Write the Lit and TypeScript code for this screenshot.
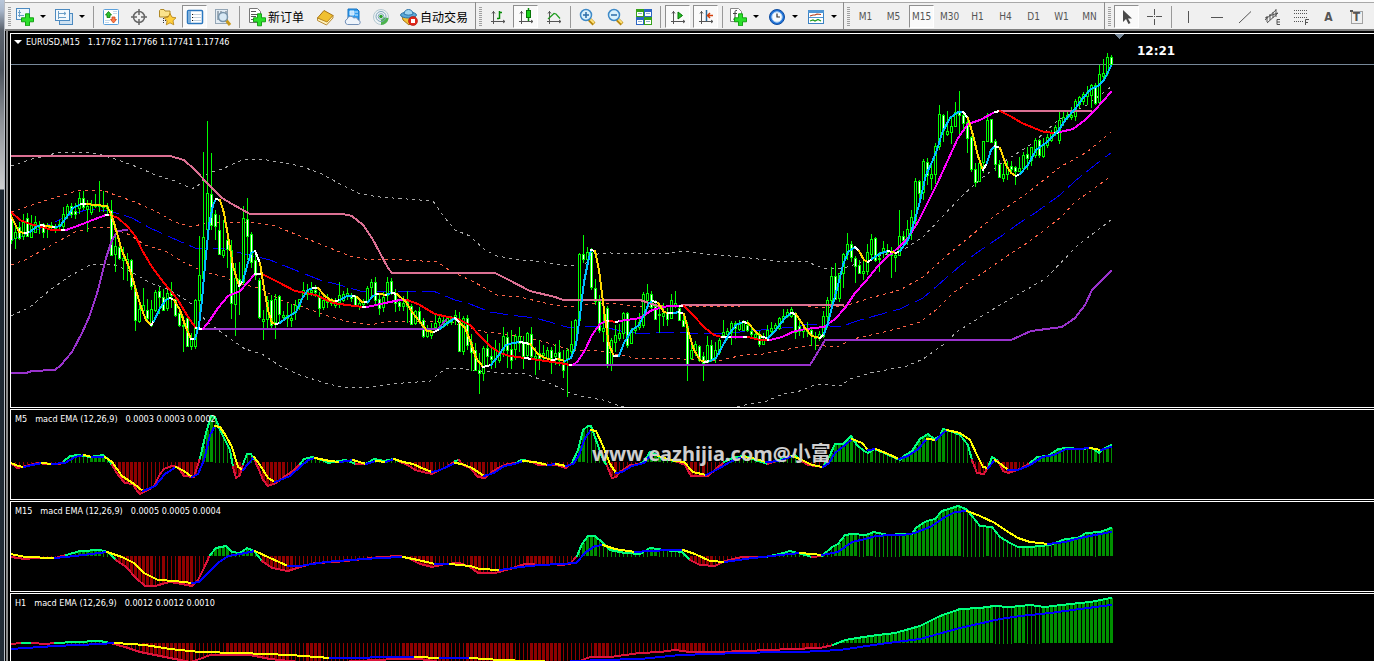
import { LitElement, html, svg, css } from "lit";
import { customElement, property, state } from "lit/decorators.js";
import { classMap } from "lit/directives/class-map.js";

type Point = [number, number];

const STEP = 4;
const FIRST_BAR = 11;

/* One candle per bar: high, body top, body bottom, low, and u(p) or d(own). */
const CANDLES = `
212 218 240 244 d|225 232 238 249 u|222 227 238 240 d|214 222 236 240 u|213 218 236 237 d|215 225 237 238 u
216 222 232 232 u|221 226 227 234 u|223 224 232 238 d|223 226 228 238 u|222 225 227 229 u|224 226 228 233 u
220 224 226 230 d|207 214 226 230 u|204 206 215 219 u|203 206 214 218 d|203 211 214 219 d|192 198 208 214 u
191 198 207 210 d|200 206 209 232 u|200 204 212 215 u|194 204 206 208 u|181 204 206 212 u|191 205 207 212 u
203 206 208 214 u|200 210 255 256 d|236 246 254 272 u|241 247 258 260 d|247 258 260 280 u|253 259 262 281 u
259 260 286 290 d|287 288 320 331 d|300 309 321 323 u|288 305 310 316 u|299 310 318 322 d|300 309 325 327 u
290 292 310 312 u|287 291 297 314 d|289 297 310 311 d|290 293 308 311 u|282 292 295 308 d|295 299 315 317 d
312 313 325 327 d|316 325 326 352 u|316 318 346 347 d|333 339 346 350 u|299 300 346 349 u|236 275 300 330 u
152 237 278 290 u|121 193 229 232 u|153 194 225 230 d|210 214 226 240 d|215 230 254 255 d|220 250 255 258 u
233 240 249 268 d|240 250 303 319 d|263 278 304 336 u|262 279 285 315 d|206 218 282 285 u|198 219 236 260 d
232 234 262 268 d|250 260 275 280 d|278 280 317 319 d|310 319 321 340 u|296 300 319 328 u|295 300 325 328 d
294 299 322 339 u|295 296 314 322 d|311 315 317 320 u|303 315 318 327 d|304 318 320 327 u|300 305 312 320 u
299 299 306 310 u|282 290 295 298 u|284 290 294 300 d|282 290 292 296 u|285 290 292 297 d|292 296 308 317 d
294 300 307 310 u|294 300 302 308 u|298 301 303 306 d|298 302 305 308 u|282 295 302 308 u|291 294 300 302 u
288 293 295 300 u|293 296 298 302 d|295 297 305 306 d|298 303 306 310 u|299 302 304 308 u|286 288 302 304 u
279 282 287 297 u|277 282 300 306 d|294 299 308 315 d|292 297 307 312 u|277 282 295 302 u|278 281 292 295 d
289 293 303 312 d|300 302 306 311 d|296 303 306 311 u|291 302 306 323 d|304 306 324 325 d|310 311 323 325 u
307 311 321 324 d|318 320 336 338 d|325 330 336 338 u|323 332 335 339 u|315 323 327 332 u|315 318 322 327 u
317 320 324 328 d|316 318 321 326 u|316 319 322 325 u|310 315 318 325 u|312 319 351 352 d|316 318 351 355 u
315 318 345 350 d|334 342 352 371 d|343 350 370 371 d|353 370 373 394 d|346 348 373 381 u|334 348 356 366 d
346 356 359 369 d|340 350 358 368 u|343 352 360 363 u|327 336 350 357 u|332 337 350 368 d|330 349 360 369 d
334 336 349 360 u|327 336 343 352 u|336 343 356 369 d|332 333 355 358 u|327 334 356 360 d|347 356 358 375 u
340 353 358 370 d|345 353 355 362 u|347 350 358 362 u|347 350 358 374 d|344 353 356 365 u|340 352 360 366 d
350 362 370 378 d|348 350 358 397 u|321 344 351 356 u|319 320 345 350 u|253 254 320 322 u|235 254 259 263 d
247 252 259 265 u|248 252 287 290 d|279 288 301 305 d|295 301 330 333 d|303 328 331 342 u|306 308 364 368 d
338 340 365 371 u|325 335 342 352 u|324 333 338 341 u|312 313 333 339 u|312 313 345 348 d|328 330 343 344 u
320 327 330 334 u|313 322 327 330 u|292 294 325 328 u|284 293 300 308 u|291 294 307 310 d|300 306 319 320 d
308 314 315 333 u|303 313 316 326 u|308 312 319 326 d|294 300 318 319 u|291 303 306 308 u|305 308 320 321 d
315 320 326 326 d|322 326 365 381 d|339 350 358 360 u|341 344 350 356 u|345 346 360 362 d|352 356 363 381 d
336 345 362 363 u|340 345 360 362 d|342 350 358 363 u|338 340 352 355 u|320 332 335 338 u|328 331 334 340 u
321 323 332 345 u|321 323 328 339 d|320 323 329 331 u|320 322 330 331 u|320 325 330 332 d
328 331 334 338 d|331 334 337 339 u|331 335 344 347 d|333 339 344 344 u|325 330 338 340 u|322 328 331 334 u
323 325 328 331 u|317 318 328 330 u|309 316 319 323 u|309 312 316 318 u|307 309 316 318 u|312 314 332 339 d
318 326 331 336 d|326 329 331 338 u|322 329 331 337 u|328 330 335 346 d|332 336 338 350 d|331 334 338 341 u
311 316 336 338 u|297 300 316 328 u|267 276 300 305 u|263 276 299 300 d|273 273 298 302 u|253 254 273 288 u
233 244 254 260 u|241 244 257 262 d|256 258 266 283 d|260 265 273 274 d|259 271 273 280 u|244 252 271 275 u
234 239 254 258 u|237 238 260 262 d|252 258 259 272 u|241 248 252 258 u|244 250 252 258 u|247 252 255 278 d
252 255 257 272 u|210 236 255 256 u|231 236 240 248 d|220 229 240 245 u|210 217 230 240 u|178 181 220 224 u
180 181 193 200 d|159 161 192 200 u|158 162 175 185 d|165 174 178 190 u|143 146 174 184 u|105 114 146 150 u
114 115 130 142 d|111 131 134 136 u|117 126 132 144 u|102 112 126 127 u|91 111 115 134 d|112 115 123 130 d
117 122 138 153 d|136 137 169 172 d|163 169 182 187 d|158 163 181 182 u|141 141 162 173 u|113 120 141 142 u
119 119 142 143 d|139 141 164 171 d|160 164 177 178 d|163 174 178 182 u|161 168 174 180 u|161 166 169 174 d
166 167 171 185 d|157 168 171 172 u|152 155 168 172 u|147 154 158 170 d|147 147 160 166 u|138 140 155 158 u
139 140 155 158 d|138 145 156 158 u|134 137 145 148 u|130 133 140 142 u|125 127 131 136 u|112 120 140 144 u
110 117 121 126 u|112 115 117 120 u|107 115 117 120 u|99 101 116 121 u|96 97 104 108 u|92 94 101 105 u
86 92 96 105 u|84 85 95 108 u|83 85 103 105 d|65 74 102 105 u|59 73 76 80 u|53 57 73 76 u
55 57 64 66 d`;

const COLORS: Record<string, string> = {
  g: "#ffd700", w: "#ffffff", c: "#00bfff", r: "#ff0000", m: "#ff00ff",
};

/* Moving averages: a colour letter starts each run, the runs join up. */
const FAST_MA = `g 11,216 15,224 19,232 25,233 w 30,232 c 36,227 41,225 w 46,226 g 53,227 w 56,227 c 60,226 66,218 73,208 81,204
w 87,204 g 95,205 107,206 111,214 115,226 122,251 127,262 132,276 137,294 142,310 146,320 151,325 w 154,321 c 160,308 166,300 170,298
w 174,300 g 180,310 185,325 191,339 w 195,339 c 199,325 202,300 205,265 209,225 213,205 216,199 w 220,200 g 224,213 228,236 233,266 239,286
w 243,281 c 247,266 251,253 255,251 w 260,263 g 264,288 268,310 272,323 276,324 w 280,323 c 286,318 296,312 303,297 308,290 313,288
w 318,288 g 324,295 330,300 336,301 w 340,300 c 347,296 353,296 w 357,297 g 362,302 365,302 w 368,302 c 372,297 376,294 w 380,294
g 386,295 w 388,294 c 392,293 w 397,294 g 406,302 412,312 420,322 427,331 434,332 w 440,329 c 446,324 455,318 w 460,323
g 465,328 470,340 476,358 483,367 w 491,365 c 498,356 506,345 513,343 520,342 w 530,344 g 538,354 545,358 552,360 w 558,359 g 565,361
c 571,358 576,345 580,315 584,282 588,262 591,250 w 595,251 g 599,270 604,310 609,345 614,356 w 619,356 c 624,343 632,330 639,325 644,315 649,303 653,301
w 658,303 g 664,312 668,313 w 674,313 c 679,312 w 684,314 g 688,330 694,350 700,360 705,362 w 710,361 c 716,358 722,347 729,334 736,325 743,322
w 748,323 g 756,332 762,337 w 768,338 c 775,331 785,318 791,313 w 796,314 g 805,328 812,336 820,338 w 824,334
c 828,323 832,307 838,285 843,265 848,252 855,247 w 859,251 g 864,260 868,262 w 872,259 c 879,254 888,251 w 892,252 g 896,253 w 900,251
c 908,240 913,226 919,205 926,175 932,162 937,150 942,133 950,118 958,112 963,112 w 968,118 g 973,135 978,156 983,170 w 987,163
c 991,150 995,146 w 1000,148 g 1006,165 1011,173 1016,176 w 1020,174 c 1028,165 1036,150 1047,142 1058,131 1066,119 1075,109 1083,98 1091,89 1098,86 1104,80 1111,66`;

const SLOW_MA = `r 11,212 20,220 30,224 42,227 52,230 62,230 w 66,230 m 80,225 95,219 106,215 w 110,215
r 118,218 128,227 136,237 142,250 152,267 164,283 178,300 188,317 196,328 w 203,329 m 210,320 218,308 228,296 240,291 248,282 255,274
w 262,274 r 278,282 295,291 316,295 333,303 347,305 363,307 w 367,307 m 385,303 400,300 407,300 r 418,304 435,314 448,317 458,319 470,325 480,336 490,346 500,353 510,356 525,358
w 532,359 r 545,361 560,363 570,365 w 573,365 m 578,361 585,350 592,335 600,324 606,321 w 610,321 r 616,322 w 620,321
m 640,318 652,310 668,306 680,306 w 684,306 r 692,314 705,328 714,335 722,337 w 732,337 m 744,337 w 748,337 r 760,340 768,340 w 770,340
m 782,337 795,331 806,329 824,327 835,319 845,308 855,293 866,281 877,267 887,257 898,248 908,238 918,222 928,202 938,182 948,160 958,138 968,124 980,120 995,112
w 1000,111 r 1010,116 1022,123 1034,128 1044,132 1055,133 w 1060,132 m 1073,129 1085,120 1095,110 1103,101 1111,92`;

const CHANNELS: [string, string][] = [
  ["upper", "11,156 170,156 184,160 195,170 208,184 222,198 232,204 250,214 343,214 352,216 363,225 372,238 380,253 388,268 392,273 495,273 505,278 530,291 555,297 563,300 640,300 658,306"],
  ["upper", "682,305 843,305"],
  ["upper", "998,111 1091,111"],
  ["lower", "11,373 26,373 32,371 55,370 61,365 72,352 82,333 90,315 98,290 106,258 112,240 118,231 127,230"],
  ["lower", "201,329 438,329 446,320"],
  ["lower", "572,365 810,365 818,352 825,340 1011,340 1031,331 1062,327 1075,318 1085,305 1092,290 1102,280 1111,271"],
];

const BANDS: [string, string][] = [
  ["outer", "11,166 32,159 45,156 60,152 85,152 102,155 118,160 140,168 155,175 175,181 192,189 200,184 208,173 222,169 242,160 260,159 280,162 300,166 320,173 340,184 360,194 380,197 433,201 445,218 455,230 470,236 485,250 497,256 520,260 545,262 565,266 585,264 598,254 610,253 660,254 687,251 705,254 730,256 750,258 775,261 805,261 815,265 822,268 840,269 860,263 880,256 906,248 923,237 940,219 963,195 982,178 1002,163 1033,143 1058,120 1087,105 1111,87"],
  ["inner", "11,212 35,204 60,196 80,190 105,191 115,195 135,202 155,211 175,222 192,227 205,223 222,222 255,223 275,226 300,236 330,248 350,256 370,260 390,259 438,262 450,271 470,280 485,288 497,295 520,297 545,303 565,307 585,305 600,303 620,304 640,307 660,305 680,306 710,307 740,306 800,304 815,308 845,306 870,298 900,290 923,277 945,257 967,239 997,214 1030,191 1060,167 1087,152 1111,132"],
  ["mid", "11,240 30,233 50,224 75,213 90,209 110,211 132,218 150,228 170,237 195,248 225,249 245,254 270,260 295,270 320,280 340,285 360,291 433,291 455,300 470,304 490,312 510,315 535,318 550,322 570,328 600,326 625,332 645,334 665,332 690,333 722,334 740,332 793,327 810,324 840,327 860,320 900,309 923,298 945,279 960,266 975,254 1000,237 1018,224 1035,213 1060,195 1075,181 1095,165 1111,153"],
  ["inner", "11,265 25,260 50,246 75,232 95,227 112,228 130,235 145,245 165,251 185,263 205,272 225,277 240,284 260,288 280,300 300,306 325,315 345,321 370,325 390,321 430,321 450,322 485,332 520,336 545,342 570,350 600,351 620,355 640,359 665,358 695,360 722,360 743,355 763,354 800,347 813,345 837,347 853,339 880,333 900,328 920,322 937,309 953,293 987,270 1010,254 1030,241 1060,218 1075,202 1095,188 1111,176"],
  ["outer", "11,316 30,307 50,290 70,276 90,265 112,264 130,271 150,283 170,290 195,306 205,320 225,335 245,349 262,354 280,366 300,375 325,383 345,388 370,387 390,384 430,381 445,369 455,368 480,371 500,373 525,374 545,381 570,393 585,397 603,400 620,406 680,420 740,406 767,401 783,394 797,392 817,384 840,386 850,379 870,373 907,366 923,359 943,345 958,331 1000,305 1045,279 1078,245 1111,220"],
];

interface Macd {
  name: string; values: string; top: number; zero: number;
  fast: string; signal: string; thick: Point[];
}

const MACD: Macd[] = [
  {
    name: "M5", values: "0.0003 0.0003 0.0002", top: 410, zero: 462,
    fast: "11,463 17,468 22,467 38,463 46,464 60,464 64,461 70,456 78,455 90,457 103,455 108,459 112,465 118,475 125,483 133,484 137,491 140,494 148,490 154,486 160,474 164,469 172,466 178,467 184,476 194,477 200,458 206,433 211,416 215,417 220,430 230,450 233,467 236,478 240,475 243,464 247,454 251,454 255,461 259,470 263,480 268,486 276,483 284,477 293,471 300,464 304,459 312,457 322,460 328,463 345,460 356,464 366,464 374,459 384,461 394,459 400,462 408,465 415,470 423,472 432,474 440,470 448,466 455,461 459,460 463,465 470,468 478,477 485,478 492,472 500,467 508,464 516,463 521,460 530,461 538,465 556,465 566,468 572,463 578,450 583,430 588,426 591,426 596,440 602,457 607,466 612,478 616,477 620,472 630,465 640,464 645,460 650,452 655,454 662,459 675,461 685,465 691,476 708,476 716,469 724,462 735,457 745,456 755,460 768,464 776,461 785,458 795,455 800,460 808,465 823,467 830,455 835,444 843,444 851,436 857,445 864,451 868,453 874,449 884,453 893,457 900,460 904,456 912,451 920,439 928,434 934,439 940,436 943,429 950,431 960,435 968,445 972,460 977,473 984,474 989,465 992,457 998,461 1003,471 1008,473 1020,469 1030,463 1037,457 1048,456 1058,449 1067,448 1080,449 1092,448 1099,453 1103,449 1111,445",
    signal: "11,463 18,466 24,467 32,465 42,463 52,464 65,463 75,457 84,455 92,457 105,457 112,462 122,476 134,484 143,491 155,486 165,474 176,467 184,471 192,477 198,474 204,460 210,435 215,426 220,427 226,436 232,447 238,467 243,470 248,464 254,457 260,465 268,478 275,482 290,476 300,467 308,460 315,458 330,461 340,462 353,460 366,464 376,461 386,462 394,459 403,462 413,464 424,469 432,472 440,470 455,463 462,464 472,468 484,476 494,473 504,466 515,464 523,461 535,462 548,465 556,464 566,466 573,464 579,455 585,438 591,430 596,431 603,446 610,464 616,473 622,472 632,466 644,463 650,456 656,455 670,460 684,462 693,472 706,475 718,469 730,462 742,457 752,458 766,462 780,461 792,456 800,459 812,465 823,467 829,463 835,453 845,445 852,439 862,443 868,450 876,449 888,454 899,459 908,456 918,449 927,439 936,440 942,434 947,430 960,433 970,440 977,455 983,467 988,468 995,460 1002,465 1008,470 1018,470 1030,465 1042,457 1054,455 1066,449 1078,449 1090,448 1101,450 1111,447",
    thick: [[88, 104], [119, 141], [176, 196], [203, 212], [235, 240], [263, 284], [413, 433], [470, 484], [488, 497], [579, 584], [611, 616], [646, 660], [690, 697], [702, 705], [830, 852], [868, 873], [903, 929], [939, 945], [978, 981], [1002, 1017], [1035, 1061], [1094, 1097], [1106, 1108]],
  },
  {
    name: "M15", values: "0.0005 0.0005 0.0004", top: 502, zero: 556,
    fast: "11,557 25,559 35,558 55,558 66,555 80,551 100,550 108,552 116,560 126,567 136,578 145,586 155,586 170,582 182,584 192,586 198,580 204,568 210,555 216,548 226,546 232,552 240,553 247,548 254,551 262,561 272,568 288,571 300,567 315,563 335,562 355,560 380,557 400,556 408,558 420,564 432,567 445,564 460,563 470,567 478,573 495,573 510,569 525,564 545,565 555,564 560,565 570,564 577,556 582,544 588,536 595,536 603,543 610,550 625,553 640,554 650,548 665,550 682,552 690,560 700,565 715,566 725,561 742,557 765,557 780,554 790,551 798,553 812,557 822,556 832,547 838,544 845,535 852,534 866,535 874,532 888,535 903,534 912,534 916,528 923,523 927,521 935,519 942,511 952,508 958,506 966,509 972,516 980,526 992,527 1000,537 1010,543 1018,547 1030,547 1050,545 1065,539 1078,538 1086,533 1100,532 1111,528",
    signal: "11,554 25,557 55,558 75,556 107,552 122,557 134,563 144,573 158,580 175,581 192,583 199,582 208,573 218,563 228,556 240,554 255,551 270,558 288,566 300,566 325,562 350,560 380,558 403,557 418,560 435,564 450,564 470,566 480,569 500,570 520,567 540,565 560,564 576,563 586,552 595,546 603,545 615,549 635,552 650,551 670,550 683,550 695,554 710,561 725,562 745,559 780,555 800,553 822,555 838,552 852,542 865,539 876,536 890,535 903,535 915,533 932,526 945,517 955,512 967,511 980,516 995,523 1005,530 1018,538 1030,542 1048,544 1065,542 1080,538 1100,534 1111,532",
    thick: [[79, 100], [119, 153], [160, 164], [176, 192], [210, 228], [243, 254], [260, 291], [411, 433], [470, 480], [524, 554], [580, 595], [648, 656], [690, 712], [832, 857], [866, 873], [903, 960], [987, 989], [1022, 1048], [1054, 1092], [1098, 1111]],
  },
  {
    name: "H1", values: "0.0012 0.0012 0.0010", top: 594, zero: 643,
    fast: "11,644 22,643 32,643 45,644 55,643 75,642 100,641 110,643 125,647 140,652 155,655 170,658 190,662 200,659 210,655 230,655 250,655 270,659 300,662 340,662 395,659 420,659 440,662 500,665 570,663 580,661 590,657 610,657 640,653 660,652 675,650 690,652 720,652 745,651 770,650 790,649 820,648 833,645 845,640 870,636 895,633 920,626 940,616 960,609 980,608 994,606 1010,607 1030,605 1045,607 1070,604 1090,602 1111,598",
    signal: "11,649 55,646 100,644 115,643 145,645 170,649 200,652 240,653 290,655 330,658 350,658 390,657 415,657 440,658 470,658 500,660 560,662 600,660 640,659 660,657 680,655 740,653 780,652 800,652 840,650 880,644 920,639 960,628 1000,619 1020,616 1050,613 1080,609 1111,605",
    thick: [[143, 192], [226, 290], [306, 320], [402, 448], [466, 512], [530, 560], [594, 608], [674, 704], [802, 816], [838, 992], [1014, 1024], [1042, 1111]],
  },
];

const toPoints = (list: string): Point[] =>
  list.trim().split(/\s+/).map((pair) => pair.split(",").map(Number) as Point);

const valueAt = (points: Point[], x: number): number => {
  const i = Math.max(1, points.findIndex((p) => p[0] >= x));
  const [x0, y0] = points[i - 1];
  const [x1, y1] = points[i];
  return Math.round(y0 + ((y1 - y0) * (x - x0)) / (x1 - x0));
};

const coloredRuns = (source: string) => {
  const runs: { color: string; points: string[] }[] = [];
  let last = "";
  for (const token of source.trim().split(/\s+/)) {
    if (COLORS[token]) {
      runs.push({ color: COLORS[token], points: last ? [last] : [] });
    } else {
      runs[runs.length - 1].points.push(token);
      last = token;
    }
  }
  return runs.map((r) => svg`<polyline class="curve" stroke=${r.color} points=${r.points.join(" ")} />`);
};

const pairRuns = (points: Point[], pick: (a: Point, b: Point) => string) =>
  points.slice(1).map((b, i) => svg`<polyline class="curve" stroke=${pick(points[i], b)}
    points=${`${points[i].join(",")} ${b.join(",")}`} />`);

const plotStyles = css`
  :host { display: block; min-width: 0; min-height: 0; position: relative; overflow: hidden;
    background: #000; border: 1px solid #fff; border-right: 0; box-sizing: border-box; }
  svg { display: block; width: 100%; height: 100%; position: absolute; inset: 0; shape-rendering: crispEdges; }
  .curve { fill: none; stroke-width: 2; stroke-linejoin: round; stroke-linecap: square; }
  .caption { display: flex; align-items: center; gap: 8px; position: relative; margin: 0; white-space: pre; color: #fff;
    font: 400 9px/14px "DejaVu Sans Condensed", "DejaVu Sans", sans-serif; }
`;

@customElement("price-chart")
class PriceChart extends LitElement {
  static styles = [plotStyles, css`
    .caption { padding: 1px 3px; }
    .symbol { display: flex; align-items: center; gap: 4px; }
    .caret { border: 4px solid transparent; border-top-color: #fff; border-bottom: 0; }
    .clock { position: absolute; left: 1126px; top: 8px; color: #fff;
      font: 700 12px/18px "DejaVu Sans", sans-serif; }
    .outer, .inner, .mid { fill: none; stroke-width: 1; }
    .outer { stroke: #a9a9a9; stroke-dasharray: 3 4; }
    .inner { stroke: #ff6347; stroke-dasharray: 3 4; }
    .mid { stroke: #0000ff; stroke-dasharray: 18 6; }
    .upper { stroke: #db7093; }
    .lower { stroke: #9932cc; }
    .wick, .up, .down { stroke: #00ff00; stroke-width: 1; }
    .up { fill: #000; }
    .down { fill: #fff; }
    .price { stroke: #778899; }
    .shift { fill: #778899; }
  `];

  render() {
    const candles = CANDLES.trim().split(/[|\n]/).map((row, i) => {
      const [high, top, bottom, low, kind] = row.trim().split(" ");
      const x = FIRST_BAR + i * STEP + 0.5;
      return svg`<line class="wick" x1=${x} x2=${x} y1=${high} y2=${low} />
        <rect class=${kind === "u" ? "up" : "down"} x=${x - 1} y=${+top + 0.5} width="2" height=${Math.max(1, +bottom - +top)} />`;
    });
    return html`
      <svg role="img" aria-label="EURUSD M15"><g transform="translate(-11 -34)">
        <line class="price" x1="11" x2="6000" y1="64.5" y2="64.5" />
        <path class="shift" d="M1114 34h10l-5 5z" />
        ${BANDS.map(([kind, pts]) => svg`<polyline class=${kind} points=${pts} />`)}
        ${candles}
        ${CHANNELS.map(([kind, pts]) => svg`<polyline class="curve ${kind}" points=${pts} />`)}
        ${coloredRuns(SLOW_MA)}
        ${coloredRuns(FAST_MA)}
      </g></svg>
      <p class="caption"><span class="symbol"><span class="caret"></span>EURUSD,M15</span><span>1.17762 1.17766 1.17741 1.17746</span></p>
      <span class="clock">12:21</span>`;
  }
}

@customElement("macd-chart")
class MacdChart extends LitElement {
  @property({ attribute: false }) data!: Macd;
  static styles = [plotStyles, css`
    .caption { padding: 2px 4px; }
    .rise { fill: #009000; }
    .fall { fill: #900000; }
  `];

  render() {
    const { name, values, top, zero, thick } = this.data;
    const fast = toPoints(this.data.fast);
    const signal = toPoints(this.data.signal);
    const bars = [];
    for (let x = FIRST_BAR; x <= 1111; x += STEP) {
      const y = valueAt(fast, x);
      if (y === zero) continue;
      const wide = thick.some(([a, b]) => x >= a && x <= b);
      bars.push(svg`<rect class=${y < zero ? "rise" : "fall"} x=${wide ? x - 1 : x} width=${wide ? 3 : 1}
        y=${Math.min(y, zero)} height=${Math.abs(y - zero) + (y < zero && !wide ? 1 : 0)} />`);
    }
    return html`
      <svg role="img" aria-label="${name} MACD"><g transform="translate(-11 ${-top})">
        ${bars}
        ${pairRuns(fast, (a, b) => ((a[1] + b[1]) / 2 <= zero ? "#00ff7f" : "#dc143c"))}
        ${pairRuns(signal, (a, b) => (b[1] > a[1] ? "#ffff00" : "#0000ff"))}
      </g></svg>
      <p class="caption"><span>${name}</span><span>macd EMA (12,26,9)</span><span>${values}</span></p>`;
  }
}

const axes = svg`<path d="M4.5 3v13M2 13.5h14M3 5.5l1.5-2 1.5 2M14 12l2 1.5-2 1.5" class="ink" />`;
const plus = svg`<path d="M10 6.500h4v4h4v4h-4v4h-4v-4H6v-4h4z" transform="translate(-.5 -.7)" fill="#2be02b" stroke="#0a9a0a" stroke-width=".9" />`;
const lens = (sign: unknown) => svg`<path d="M10 11l5 5" stroke="#b8860b" stroke-width="4" /><path d="M11 11l4 4" stroke="#ffe27a" stroke-width="2" />
  <circle cx="7" cy="7" r="5.5" fill="#d9f1fc" stroke="#3e8ac8" stroke-width="1.5" />${sign}`;

const ICONS: Record<string, unknown> = {
  newChart: svg`<rect x=".5" y=".5" width="13" height="11" fill="#eef6fc" stroke="#4c8ac0" /><path d="M3.500 2v7M2 7.500h6M2 4.500h3" stroke="#6b9fc8" fill="none" />${plus}`,
  profiles: svg`<rect x="4.500" y="5.500" width="13" height="11" fill="#cfe2f2" stroke="#4c8ac0" /><rect x=".5" y="1.500" width="14" height="11" fill="#f4f9fd" stroke="#4c8ac0" /><path d="M3 5.500h8M9 4l2 1.500L9 7M3 9.500h8M3.500 3v8" stroke="#6b9fc8" fill="none" />`,
  market: svg`<rect x="1.500" y="1.500" width="15" height="15" rx="1" fill="#fff" stroke="#5aa0dc" /><path d="M3 12.500h5M3 14.500h4M11 3.500h4M11 5.500h4" stroke="#c4d8e8" /><path d="M6.500 3.500L9.500 7H8v2.500H5V7H3.500z" fill="#2fc22f" stroke="#0a7a0a" stroke-width=".8" /><path d="M11.500 15L8.500 11.500H10V9h3v2.500h1.500z" fill="#ff7a48" stroke="#c8481c" stroke-width=".8" />`,
  target: svg`<circle cx="9" cy="9" r="5.500" fill="none" stroke="#666" stroke-width="1.500" /><path d="M9 1v6M9 11v6M1 9h6M11 9h6" stroke="#666" stroke-width="1.500" />`,
  folder: svg`<path d="M1.500 9V2.500l1-1H6l1 1.500h5V8L7 9z" fill="#fbe38c" stroke="#b08a28" /><path d="M5.500 10v6M5 12.500h3" stroke="#333" stroke-dasharray="1 1" /><path d="M12 5.500l2 3.700 4 .6-3 2.900.8 4.100-3.800-2-3.700 2 .8-4.100-3-2.900 4-.6z" fill="#ffcf3d" stroke="#b27d0c" stroke-width=".8" />`,
  navigator: svg`<rect x="1.500" y="2.500" width="15" height="13" rx="1" fill="#fff" stroke="#2b78c0" stroke-width="1.500" /><path d="M2 3h3v12H2z" fill="#7eb0dc" /><path d="M7 6.500h8M7 9.500h8M7 12.500h8" stroke="#c4d2de" /><path d="M6 6h1v1H6zM6 9h1v1H6zM6 12h1v1H6z" fill="#111" />`,
  tester: svg`<rect x="1.500" y="1.500" width="12" height="14" fill="#e4edf4" stroke="#94a6b6" /><path d="M4 3v9M7 3v3M12 3v3" stroke="#5a6b7a" /><path d="M12 12l4 5" stroke="#c9991b" stroke-width="3" /><circle cx="9" cy="9" r="4.500" fill="#d6e8f4" fill-opacity=".85" stroke="#7a96ac" stroke-width="1.500" />`,
  order: svg`<path d="M1.500.5h8l3 3v11h-11z" fill="#fff" stroke="#777" /><path d="M3 3.500h5M3 6.500h8M3 8.500h5M3 11.500h4" stroke="#555" />${plus}`,
  book: svg`<path d="M1.500 10L8 2.500l9 5-6 8z" fill="#f0c030" stroke="#a87413" /><path d="M1.500 10l9.500 4 6-6.500v2.500L10.500 17 1.500 12.500z" fill="#fff0b8" stroke="#a87413" stroke-width=".8" />`,
  cloud: svg`<path d="M4 1h9l2 2v9H4z" fill="#2f9cf0" stroke="#1673c0" /><path d="M6 3h4v4H6zM11 4h3M11 7h3" fill="#bfe2ff" stroke="#d8efff" /><path d="M3.500 16.500a2.800 2.800 0 01-.3-5.400 3.500 3.500 0 016.500-1 3 3 0 014.500 1.900A2.300 2.300 0 0114.500 16.500z" fill="#eef4fb" stroke="#7290b8" />`,
  signal: svg`<circle cx="9" cy="9" r="7.500" fill="#eef3f4" stroke="#b4c8d0" /><path d="M9 17V9l7.500 1A7.500 7.500 0 019 17z" fill="#4cb44c" /><circle cx="9" cy="8.500" r="5" fill="none" stroke="#7ea4bc" /><circle cx="9" cy="8.500" r="2.800" fill="#fff" stroke="#7ea4bc" /><circle cx="9" cy="8.500" r="1.800" fill="#2ba12b" />`,
  expert: svg`<path d="M2 8h13v3l-6 6-6-5z" fill="#f2c336" stroke="#a87413" /><ellipse cx="8.500" cy="7" rx="8" ry="3" fill="#5aa8d8" stroke="#2d74a8" /><path d="M4 6c0-6 9-6 9 0-2 1.500-7 1.500-9 0z" fill="#9fd4f0" stroke="#2d74a8" /><circle cx="13" cy="13" r="4.500" fill="#e0261b" stroke="#a81108" stroke-width=".6" /><rect x="11" y="11" width="4" height="4" fill="#fff" />`,
  bars: svg`${axes}<path d="M10.500 3v8M8 10.500h2M11 4.500h2" stroke="#078a07" stroke-width="1.500" />`,
  candles: svg`${axes}<path d="M11.500 0v13" stroke="#078a07" stroke-width="1.500" /><rect x="9.500" y="2.500" width="4" height="7" fill="#19d019" stroke="#067506" />`,
  line: svg`${axes}<path d="M3 11L9 5.500l2 .5 4 4.500" fill="none" stroke="#1d9b1d" stroke-width="1.200" />`,
  zoomIn: lens(svg`<path d="M4 7h6M7 4v6" stroke="#2b6ca8" stroke-width="1.500" />`),
  zoomOut: lens(svg`<path d="M4 7h6" stroke="#2b6ca8" stroke-width="1.500" />`),
  tile: svg`<path d="M1 1h8v8H1z" fill="#35a31b" /><path d="M9 1h8v8H9zM1 9h8v8H1z" fill="#2c66c4" /><path d="M9 9h8v8H9z" fill="#35a31b" /><path d="M2 4h6v4H2zM10 4h6v4h-6zM2 12h6v4H2zM10 12h6v4h-6z" fill="#fff" /><path d="M3 5.500h4M11 5.500h4M3 13.500h4M11 13.500h4" stroke="#8fb0cc" />`,
  scroll: svg`${axes}<path d="M9 4l4.500 3.500L9 11z" fill="#25bf25" stroke="#067506" />`,
  shift: svg`${axes}<path d="M9.500 2v11" stroke="#286a9c" stroke-width="1.500" /><path d="M16 7.500h-5M13 5l-2.500 2.500L13 10" fill="none" stroke="#d2400c" stroke-width="1.500" />`,
  indicator: svg`<path d="M1.500.5h8l3 3v10h-11z" fill="#fff" stroke="#888" /><path d="M8 2.500C6 2 6 3 6 5v5.500c0 1-1 1-2 .5M4 5.500h4" fill="none" stroke="#444" />${plus}`,
  clock: svg`<circle cx="9" cy="9" r="7.500" fill="#1f72d8" stroke="#0f4da0" /><circle cx="9" cy="9" r="5.200" fill="#f6fbff" stroke="#a6cdf2" /><path d="M9 5.500V9h3" fill="none" stroke="#333" stroke-width="1.200" />`,
  template: svg`<rect x="1.500" y="2.500" width="15" height="13" fill="#fff" stroke="#3b82c4" /><path d="M1 2h16v3H1zM2 9h14v1H2z" fill="#4f95d4" /><path d="M3 8l3-1h2l2-1 4 .5" fill="none" stroke="#b23a1c" stroke-width="1.200" /><path d="M3 13l3-1 2 1 3-1.500 3 1.500" fill="none" stroke="#1d9b1d" stroke-width="1.200" />`,
  cursor: svg`<path d="M5 2v12l3-3 2.500 5 2-1-2.500-4.500h4z" fill="#4a4a4a" />`,
  cross: svg`<path d="M8.500 1v6M8.500 11v6M1 8.500h6M10 8.500h6" class="ink" /><path d="M8 8h1v1H8z" fill="#555" />`,
  vline: svg`<path d="M8.500 3v12" class="ink" />`,
  hline: svg`<path d="M3 9.500h12" class="ink" />`,
  trend: svg`<path d="M3 15L15 3.500" class="ink" />`,
  channel: svg`<path d="M1 12L12 2M3 15L14 5M3 8v6M6 6v6M9 4v6M12 1v8M1 10l3-1M5 8l9-3" class="ink" /><path d="M16 11.500h-3v5h3M13 14h3" class="ink" />`,
  fibo: svg`<path d="M2 2.500h14M2 5.500h14M2 9.500h14M2 13.500h9" class="ink" stroke-dasharray="1 1" /><path d="M13.500 17v-5.500H17M14 14.500h2" class="ink" />`,
  label: svg`<rect x="3.500" y="3.500" width="11" height="12" class="ink" stroke-dasharray="1 1" /><path d="M2 2h3v2H2z" fill="#555" />`,
};

interface Tool { id: string; title: string; text?: string; menu?: boolean; glyph?: string }
const tool = (id: string, title: string, extra: Partial<Tool> = {}): Tool => ({ id, title, ...extra });
const SEP = null;

const GROUPS: (Tool | null)[][] = [
  [
    tool("newChart", "新图表", { menu: true }), tool("profiles", "配置文件", { menu: true }), SEP,
    tool("market", "市场报价"), tool("target", "数据窗口"), tool("folder", "导航"), tool("navigator", "终端"), tool("tester", "策略测试"), SEP,
    tool("order", "新订单", { text: "新订单" }), tool("book", "编辑器"), tool("cloud", "云服务"), tool("signal", "信号"),
    tool("expert", "自动交易", { text: "自动交易" }),
  ],
  [
    tool("bars", "柱状图"), tool("candles", "阴阳烛"), tool("line", "折线图"), SEP,
    tool("zoomIn", "放大"), tool("zoomOut", "缩小"), tool("tile", "平铺窗口"), SEP,
    tool("scroll", "自动滚动"), tool("shift", "图表平移"), SEP,
    tool("indicator", "指标", { menu: true }), tool("clock", "周期", { menu: true }), tool("template", "模板", { menu: true }),
  ],
  ["M1", "M5", "M15", "M30", "H1", "H4", "D1", "W1", "MN"].map((p) => tool(p, p, { glyph: p })),
  [
    tool("cursor", "光标"), tool("cross", "十字准线"), SEP, tool("vline", "垂直线"), tool("hline", "水平线"), tool("trend", "趋势线"),
    tool("channel", "通道"), tool("fibo", "斐波那契"), tool("text", "文字", { glyph: "A" }), tool("label", "文字标签", { glyph: "T" }),
  ],
];

@customElement("tool-bar")
class ToolBar extends LitElement {
  @state() private pressed = new Set(["navigator", "candles", "scroll", "shift", "M15", "cursor"]);

  static styles = css`
    :host { display: flex; height: 31px; box-sizing: border-box; overflow: hidden; background: #f0f0f0;
      border-top: 2px solid #fbfbfb; border-bottom: 2px solid #808080; box-shadow: inset 0 1px #a8a8a8; }
    .group { display: flex; align-items: center; gap: 3px; padding: 2px 2px 0 3px; flex: none; border-right: 1px solid #8c8c8c; }
    .group:last-child { border-right: 0; }
    .grip { width: 3px; height: 20px; background: repeating-linear-gradient(#a0a0a0 0 1px, transparent 1px 2px); }
    .sep { width: 1px; height: 22px; margin: 0 1px; background: #999; }
    button { display: flex; align-items: center; justify-content: center; gap: 3px; width: 25px; height: 23px; padding: 0;
      border: 1px solid transparent; background: none; color: #555;
      font: 400 10px/14px "DejaVu Sans Condensed", "DejaVu Sans", sans-serif; }
    .menu { width: 36px; gap: 6px; padding-left: 1px; justify-content: flex-start; }
    .wide { width: auto; padding: 0 4px; color: #000; font: 400 12px/16px "Noto Sans CJK SC", sans-serif; }
    .on { background: #fafafa; border-color: #8f8f8f #fff #fff #8f8f8f; }
    .caret { border: 3px solid transparent; border-top-color: #000; border-bottom: 0; }
    .mark { font-weight: 700; font-size: 12px; }
    .stack { display: grid; place-items: center; }
    .stack > * { grid-area: 1 / 1; }
    svg { width: 18px; height: 18px; flex: none; }
    .wide svg { width: 16px; height: 18px; overflow: visible; }
    .ink { fill: none; stroke: #555; stroke-width: 1; }
  `;

  private toggle(id: string) {
    const next = new Set(this.pressed);
    next.has(id) ? next.delete(id) : next.add(id);
    this.pressed = next;
  }

  private button(t: Tool) {
    const on = this.pressed.has(t.id);
    const icon = ICONS[t.id] ? html`<svg viewBox="0 0 18 18" preserveAspectRatio="xMidYMid slice" aria-hidden="true">${ICONS[t.id]}</svg>` : "";
    const glyph = t.glyph ? html`<span class=${classMap({ mark: t.glyph.length === 1 })}>${t.glyph}</span>` : "";
    return html`<button type="button" class=${classMap({ on, menu: !!t.menu, wide: !!t.text })}
      aria-label=${t.title} aria-pressed=${on} @click=${() => this.toggle(t.id)}>
      ${icon && glyph ? html`<span class="stack">${icon}${glyph}</span>` : html`${icon}${glyph}`}${t.text ? html`<span>${t.text}</span>` : ""}${t.menu ? html`<span class="caret"></span>` : ""}
    </button>`;
  }

  render() {
    return GROUPS.map((group) => html`<div class="group" role="toolbar"><span class="grip"></span>
      ${group.map((t) => (t ? this.button(t) : html`<span class="sep"></span>`))}</div>`);
  }
}

@customElement("app-root")
class AppRoot extends LitElement {
  static styles = css`
    :host { display: flex; height: 100vh; overflow: hidden; background: #000; }
    .edge { flex: none; width: 4px; border-right: 1px solid #b8bcc4;
      background: linear-gradient(#b9c7da 0, #aab8cc 10px, #5b626c 30px, #4c535c 70px, #8c9096 120px, #cfcfcf 189px, #1c2630 190px, #222c36 100%); }
    .frame { flex: 1; min-width: 0; display: flex; flex-direction: column; }
    .client { flex: 1; min-height: 0; border-left: 2px solid #8c8c8c; margin-left: 1px; padding: 2px 0 0 2px;
      display: grid; grid-template-rows: minmax(0, 1fr) 91px 91px 68px; row-gap: 1px; position: relative; }
    .sub { position: relative; display: grid; min-width: 0; }
    .last { border-bottom: 0; }
    .watermark { position: absolute; left: 582px; top: 32px; white-space: nowrap; color: #cecece;
      font: 700 20px/26px "Noto Sans", "Noto Sans CJK SC", sans-serif; }
  `;

  render() {
    return html`
      <div class="edge"></div>
      <div class="frame">
        <tool-bar></tool-bar>
        <main class="client">
          <price-chart></price-chart>
          <div class="sub">
            <macd-chart .data=${MACD[0]}></macd-chart>
            <span class="watermark">www.eazhijia.com@小富</span>
          </div>
          <macd-chart .data=${MACD[1]}></macd-chart>
          <macd-chart class="last" .data=${MACD[2]}></macd-chart>
        </main>
      </div>`;
  }
}
